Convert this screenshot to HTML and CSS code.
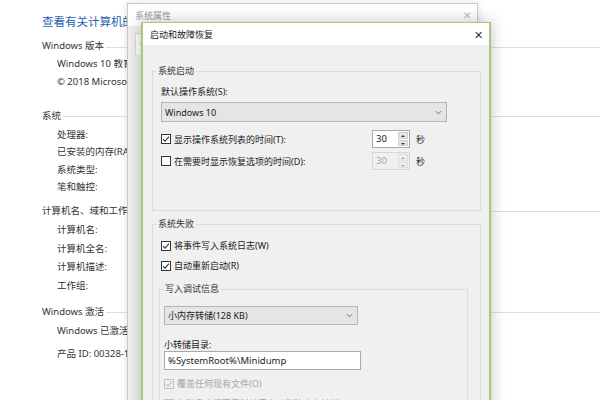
FILE: index.html
```html
<!DOCTYPE html>
<html lang="zh-CN">
<head>
    <meta charset="UTF-8">
    <title>系统</title>
    <link rel="stylesheet" href="styles.css">
</head>
<body>

    <div class="page">
        <h1>查看有关计算机的基本信息</h1>

        <div class="section-title">Windows 版本</div>
        <div class="row">Windows 10 教育版</div>
        <div class="row">© 2018 Microsoft Corporation。保留所有权利。</div>

        <div class="section-title s2">系统</div>
        <div class="row tight first">处理器:</div>
        <div class="row tight">已安装的内存(RAM):</div>
        <div class="row tight">系统类型:</div>
        <div class="row tight">笔和触控:</div>

        <div class="section-title s3">计算机名、域和工作组设置</div>
        <div class="row wide first">计算机名:</div>
        <div class="row wide">计算机全名:</div>
        <div class="row wide">计算机描述:</div>
        <div class="row wide">工作组:</div>

        <div class="section-title s4">Windows 激活</div>
        <div class="row first">Windows 已激活　阅读 Microsoft 软件许可条款</div>
        <div class="row product">产品 ID: 00328-10000-00001-AA000</div>
    </div>

    <!-- 系统属性 (inactive, behind) -->
    <div class="dialog back">
        <div class="titlebar">
            <span class="title">系统属性</span>
            <span class="close">✕</span>
        </div>
        <div class="back-body">
            <div class="tabs">
                <span class="tab">计算机名</span>
            </div>
        </div>
    </div>

    <!-- 启动和故障恢复 (active) -->
    <div class="dialog front">
        <div class="titlebar">
            <span class="title">启动和故障恢复</span>
            <span class="close">✕</span>
        </div>
        <div class="body">
            <fieldset class="group">
                <legend>系统启动</legend>
                <div class="field-label">默认操作系统(S):</div>
                <div class="select os-select">
                    <span>Windows 10</span>
                    <svg class="chevron" viewBox="0 0 8 5"><path d="M1 1l3 3 3-3"/></svg>
                </div>

                <div class="time-row">
                    <label class="check">
                        <svg class="box" viewBox="0 0 10 10"><rect x="0.5" y="0.5" width="9" height="9"/><path d="M2 5.2l2 2 4-4.6"/></svg>
                        显示操作系统列表的时间(T):
                    </label>
                    <div class="spin">
                        <span class="spin-value">30</span>
                        <span class="spin-btns"><i class="up"></i><i class="down"></i></span>
                    </div>
                    <span class="unit">秒</span>
                </div>

                <div class="time-row">
                    <label class="check">
                        <svg class="box" viewBox="0 0 10 10"><rect x="0.5" y="0.5" width="9" height="9"/></svg>
                        在需要时显示恢复选项的时间(D):
                    </label>
                    <div class="spin disabled">
                        <span class="spin-value">30</span>
                        <span class="spin-btns"><i class="up"></i><i class="down"></i></span>
                    </div>
                    <span class="unit">秒</span>
                </div>
            </fieldset>

            <fieldset class="group failure">
                <legend>系统失败</legend>
                <label class="check line">
                    <svg class="box" viewBox="0 0 10 10"><rect x="0.5" y="0.5" width="9" height="9"/><path d="M2 5.2l2 2 4-4.6"/></svg>
                    将事件写入系统日志(W)
                </label>
                <label class="check line">
                    <svg class="box" viewBox="0 0 10 10"><rect x="0.5" y="0.5" width="9" height="9"/><path d="M2 5.2l2 2 4-4.6"/></svg>
                    自动重新启动(R)
                </label>

                <fieldset class="subgroup">
                    <legend>写入调试信息</legend>
                    <div class="select dump-select">
                        <span>小内存转储(128 KB)</span>
                        <svg class="chevron" viewBox="0 0 8 5"><path d="M1 1l3 3 3-3"/></svg>
                    </div>
                    <div class="field-label dir-label">小转储目录:</div>
                    <div class="textbox">%SystemRoot%\Minidump</div>
                    <label class="check line disabled">
                        <svg class="box" viewBox="0 0 10 10"><rect x="0.5" y="0.5" width="9" height="9"/><path d="M2 5.2l2 2 4-4.6"/></svg>
                        覆盖任何现有文件(O)
                    </label>
                    <label class="check line disabled">
                        <svg class="box" viewBox="0 0 10 10"><rect x="0.5" y="0.5" width="9" height="9"/></svg>
                        在磁盘空间不足时禁用自动删除内存转储(A)
                    </label>
                </fieldset>
            </fieldset>
        </div>
    </div>

</body>
</html>
```

FILE: styles.css
```css
body {
    margin: 0;
    height: 400px;
    overflow: hidden;
    position: relative;
    background: #fff;
    font-family: "Noto Sans", "Noto Sans CJK SC", sans-serif;
    color: #333;
}

/* control panel page behind the dialogs */
.page {
    padding: 12px 0 0 42px;
    font-size: 9.5px;
    white-space: nowrap;
}
.page h1 {
    margin: 0;
    font-size: 11.5px;
    font-weight: normal;
    line-height: 20px;
    color: #2462b2;
}
.section-title {
    display: flex;
    align-items: center;
    line-height: 18px;
    margin-top: 5px;
}
.section-title::after {
    content: "";
    flex: 1;
    border-top: 1px solid #dedede;
    margin: 2px 0 0 2px;
}
.section-title.s2 { margin-top: 15px; }
.section-title.s3 { margin-top: 6px; }
.section-title.s4 { margin-top: 7px; }
.row {
    padding-left: 15px;
    line-height: 18.4px;
}
.row.first { margin-top: 1px; }
.row.tight { line-height: 17.5px; }
.row.wide { line-height: 18.7px; }
.row.product { margin-top: 5px; }

/* dialogs */
.dialog {
    position: absolute;
    font-size: 9px;
    color: #1a1a1a;
    background: #f0f0f0;
}
.titlebar {
    display: flex;
    align-items: center;
    justify-content: space-between;
    height: 22px;
    padding: 0 6px 0 7px;
    background: #fff;
}
.close {
    font-size: 10px;
    line-height: 1;
}

.back {
    left: 127px;
    top: 3px;
    width: 349px;
    height: 420px;
    border: 1px solid #cacaca;
    box-shadow: 0 0 8px rgba(0, 0, 0, 0.12);
}
.back .titlebar {
    color: #9c9c9c;
}
.back .close {
    color: #b4b4b4;
}
.back-body {
    padding: 7px 0 0 7px;
}
.tab {
    display: inline-block;
    padding: 4px 4px;
    background: #fff;
    border: 1px solid #d9d9d9;
    border-bottom: none;
}

.front {
    left: 141px;
    top: 22px;
    width: 346px;
    height: 420px;
    border: 2px solid #a8c87f;
    border-top-width: 1px;
    box-shadow: 0 0 14px rgba(0, 0, 0, 0.25);
}
.front .close {
    color: #333;
    font-size: 11px;
}
.body {
    padding: 20px 8px 0 9px;
}

.group {
    margin: 0;
    padding: 8px 8px 40px 8px;
    border: 1px solid #dcdcdc;
    min-width: 0;
}
.group legend {
    margin-left: -5px;
    padding: 0 2px;
    line-height: 12px;
    color: #333;
}
.group.failure {
    margin-top: 7px;
    padding-bottom: 0;
}

.field-label {
    line-height: 14px;
}
.select {
    display: flex;
    align-items: center;
    justify-content: space-between;
    box-sizing: border-box;
    height: 20px;
    margin-top: 3px;
    padding: 0 4px 0 3px;
    background: #e5e5e5;
    border: 1px solid #b6b6b6;
}
.os-select {
    width: 286px;
}
.chevron {
    width: 7px;
    height: 5px;
    fill: none;
    stroke: #666;
    stroke-width: 1.1;
}

.time-row {
    display: grid;
    grid-template-columns: 205px 38px auto;
    column-gap: 6px;
    align-items: center;
    margin-top: 8px;
}
.time-row + .time-row {
    margin-top: 4px;
}

.check {
    display: flex;
    align-items: center;
    gap: 3px;
    white-space: nowrap;
}
.check.line {
    line-height: 16px;
    margin-top: 4px;
}
.group.failure > .check.line:first-of-type {
    margin-top: 0;
}
.box {
    width: 10px;
    height: 10px;
    flex: none;
    fill: #fff;
    stroke: #333;
    stroke-width: 1;
}
.box path {
    fill: none;
    stroke-width: 1.1;
}
.check.disabled {
    color: #a6a6a6;
}
.check.disabled .box {
    stroke: #c2c2c2;
    fill: #f0f0f0;
}

.spin {
    display: flex;
    box-sizing: border-box;
    height: 18px;
    background: #fff;
    border: 1px solid #a9a9a9;
}
.spin-value {
    flex: 1;
    padding-left: 3px;
    line-height: 16px;
    font-size: 9.5px;
}
.spin-btns {
    display: flex;
    flex-direction: column;
    gap: 1px;
    width: 10px;
    padding: 1px 1px 1px 0;
}
.spin-btns i {
    flex: 1;
    position: relative;
    background: #e6e6e6;
    border: 1px solid #cfcfcf;
}
.spin-btns i::after {
    content: "";
    position: absolute;
    left: 2px;
    top: 2px;
    border-left: 2px solid transparent;
    border-right: 2px solid transparent;
}
.spin-btns .up::after {
    border-bottom: 2px solid #333;
}
.spin-btns .down::after {
    border-top: 2px solid #333;
}
.spin.disabled {
    background: #f0f0f0;
    border-color: #d6d6d6;
    color: #a6a6a6;
}
.spin.disabled .spin-btns i {
    background: #f0f0f0;
    border-color: #dcdcdc;
}
.spin.disabled .spin-btns .up::after {
    border-bottom-color: #a6a6a6;
}
.spin.disabled .spin-btns .down::after {
    border-top-color: #a6a6a6;
}
.unit {
    color: #333;
}

.subgroup {
    margin: 9px 4px 0 -2px;
    padding: 11px 4px 30px 4px;
    border: 1px solid #dcdcdc;
    min-width: 0;
}
.subgroup legend {
    margin-left: -1px;
    padding: 0 2px;
    line-height: 12px;
    color: #333;
}
.dump-select {
    width: 194px;
    height: 19px;
    margin-top: 0;
}
.dir-label {
    margin-top: 14px;
    line-height: 12px;
}
.textbox {
    box-sizing: border-box;
    width: 197px;
    height: 19px;
    padding-left: 3px;
    line-height: 17px;
    background: #fff;
    border: 1px solid #a9a9a9;
    font-size: 9.5px;
}
.subgroup .check.line:first-of-type {
    margin-top: 6px;
}
```
